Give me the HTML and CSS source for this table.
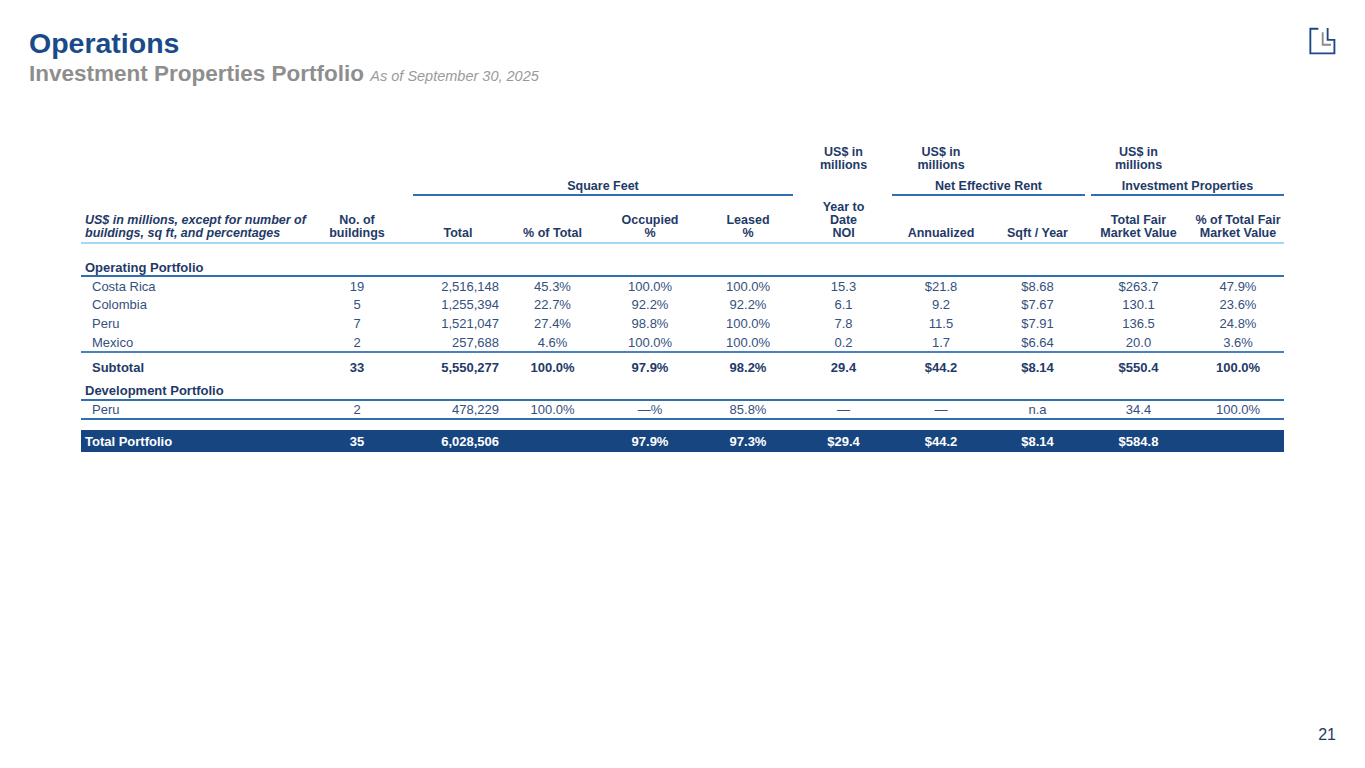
FILE: index.html
```html
<!DOCTYPE html>
<html lang="en">
<head>
<meta charset="utf-8">
<title>Operations – Investment Properties Portfolio</title>
<link rel="stylesheet" href="styles.css">
</head>
<body>
<div class="slide">
  <header class="head">
    <div class="titles">
      <h1 class="title">Operations</h1>
      <h2 class="subtitle">Investment Properties Portfolio <span class="asof">As of September 30, 2025</span></h2>
    </div>
    <svg class="logo" width="36" height="36" viewBox="15 10 35 35" aria-hidden="true">
      <path d="M28 14.6 H20.2 V38.6 H43.6 V25.4 H37 V13.8" fill="none" stroke="#1d4787" stroke-width="1.8"/>
      <path d="M32.2 18 V30.2 H40.3" fill="none" stroke="#8c8c8c" stroke-width="1.8"/>
    </svg>
  </header>

  <table class="grid">
    <colgroup>
      <col style="width:235px"><col style="width:82px"><col style="width:108px"><col style="width:93px">
      <col style="width:102px"><col style="width:94px"><col style="width:97px"><col style="width:98px">
      <col style="width:95px"><col style="width:107px"><col style="width:92px">
    </colgroup>
    <tr class="r-units">
      <td colspan="6"></td>
      <td class="c">US$ in<br>millions</td>
      <td class="c">US$ in<br>millions</td>
      <td></td>
      <td class="c">US$ in<br>millions</td>
      <td></td>
    </tr>
    <tr class="r-group">
      <td colspan="2"></td>
      <td colspan="4"><div class="grp grp-sf">Square Feet</div></td>
      <td></td>
      <td colspan="2"><div class="grp">Net Effective Rent</div></td>
      <td colspan="2"><div class="grp grp-ip">Investment Properties</div></td>
    </tr>
    <tr class="r-head">
      <td class="lbl-head">US$ in millions, except for number of<br>buildings, sq ft, and percentages</td>
      <td class="c">No. of<br>buildings</td>
      <td class="c total-h">Total</td>
      <td class="c">% of Total</td>
      <td class="c">Occupied<br>%</td>
      <td class="c">Leased<br>%</td>
      <td class="c">Year to<br>Date<br>NOI</td>
      <td class="c">Annualized</td>
      <td class="c">Sqft / Year</td>
      <td class="c">Total Fair<br>Market Value</td>
      <td class="c">% of Total Fair<br>Market Value</td>
    </tr>
    <tr class="r-section r-sec-op">
      <td class="sec" colspan="11">Operating Portfolio</td>
    </tr>
    <tr class="r-data r-first">
      <td class="name">Costa Rica</td><td class="c">19</td><td class="r">2,516,148</td><td class="c">45.3%</td><td class="c">100.0%</td><td class="c">100.0%</td><td class="c">15.3</td><td class="c">$21.8</td><td class="c">$8.68</td><td class="c">$263.7</td><td class="c">47.9%</td>
    </tr>
    <tr class="r-data">
      <td class="name">Colombia</td><td class="c">5</td><td class="r">1,255,394</td><td class="c">22.7%</td><td class="c">92.2%</td><td class="c">92.2%</td><td class="c">6.1</td><td class="c">9.2</td><td class="c">$7.67</td><td class="c">130.1</td><td class="c">23.6%</td>
    </tr>
    <tr class="r-data">
      <td class="name">Peru</td><td class="c">7</td><td class="r">1,521,047</td><td class="c">27.4%</td><td class="c">98.8%</td><td class="c">100.0%</td><td class="c">7.8</td><td class="c">11.5</td><td class="c">$7.91</td><td class="c">136.5</td><td class="c">24.8%</td>
    </tr>
    <tr class="r-data r-last">
      <td class="name">Mexico</td><td class="c">2</td><td class="r">257,688</td><td class="c">4.6%</td><td class="c">100.0%</td><td class="c">100.0%</td><td class="c">0.2</td><td class="c">1.7</td><td class="c">$6.64</td><td class="c">20.0</td><td class="c">3.6%</td>
    </tr>
    <tr class="r-sub">
      <td class="name">Subtotal</td><td class="c">33</td><td class="r">5,550,277</td><td class="c">100.0%</td><td class="c">97.9%</td><td class="c">98.2%</td><td class="c">29.4</td><td class="c">$44.2</td><td class="c">$8.14</td><td class="c">$550.4</td><td class="c">100.0%</td>
    </tr>
    <tr class="r-section r-sec-dev">
      <td class="sec" colspan="11">Development Portfolio</td>
    </tr>
    <tr class="r-data r-dev">
      <td class="name">Peru</td><td class="c">2</td><td class="r">478,229</td><td class="c">100.0%</td><td class="c">—%</td><td class="c">85.8%</td><td class="c">—</td><td class="c">—</td><td class="c">n.a</td><td class="c">34.4</td><td class="c">100.0%</td>
    </tr>
    <tr class="r-gap"><td colspan="11"></td></tr>
    <tr class="r-total">
      <td class="tot-name">Total Portfolio</td><td class="c">35</td><td class="r">6,028,506</td><td class="c"></td><td class="c">97.9%</td><td class="c">97.3%</td><td class="c">$29.4</td><td class="c">$44.2</td><td class="c">$8.14</td><td class="c">$584.8</td><td class="c"></td>
    </tr>
  </table>

  <footer class="foot">21</footer>
</div>
</body>
</html>
```

FILE: styles.css
```css
* { box-sizing: border-box; }
html, body { margin: 0; padding: 0; background: #ffffff; }
body { font-family: "Liberation Sans", Arial, sans-serif; }

.slide {
  width: 1365px;
  height: 768px;
  display: flex;
  flex-direction: column;
  overflow: hidden;
}

.head {
  display: flex;
  justify-content: space-between;
  align-items: flex-start;
  padding: 28px 24px 0 29px;
}
.title {
  margin: 0;
  font-size: 28.5px;
  line-height: 30px;
  font-weight: bold;
  color: #1a4a89;
}
.subtitle {
  margin: 4px 0 0;
  font-size: 22.5px;
  line-height: 24px;
  font-weight: bold;
  color: #8e8e8e;
}
.asof {
  font-size: 14.5px;
  font-weight: normal;
  font-style: italic;
  color: #9a9a9a;
}
.logo { margin-top: -4px; display: block; }

.grid {
  margin: 57px 0 0 81px;
  width: 1203px;
  table-layout: fixed;
  border-collapse: separate;
  border-spacing: 0;
  font-size: 13px;
  color: #34507e;
}
.grid td { padding: 0; white-space: nowrap; }
.c { text-align: center; }
.r { text-align: right; padding-right: 7px !important; }

.r-units td {
  font-size: 12.5px;
  font-weight: bold;
  line-height: 13px;
  color: #1f3a68;
  vertical-align: top;
  height: 27px;
  padding-top: 1px;
}
.r-group td { vertical-align: bottom; }
.grp {
  padding-top: 7px;
  line-height: 15px;
  font-size: 12.5px;
  font-weight: bold;
  color: #1f3a68;
  text-align: center;
  border-bottom: 2px solid #2f70b3;
}
.grp-sf { margin-left: 15px; margin-right: 2px; }
.grp-ip { margin-left: 6px; }

.r-head td {
  font-size: 12.5px;
  font-weight: bold;
  line-height: 13px;
  color: #1f3a68;
  vertical-align: bottom;
  height: 48px;
  padding-bottom: 2px;
  border-bottom: 2px solid #a6d8f3;
}
.r-head .lbl-head { font-style: italic; padding-left: 4px; }
.r-head .total-h { padding-left: 12px; }

.sec {
  font-weight: bold;
  color: #1f3a68;
  padding-left: 4px !important;
  line-height: 15px;
}
.r-sec-op .sec { padding-top: 16px !important; border-bottom: 2px solid #2f70b3; }
.r-sec-dev .sec { padding-top: 3px !important; padding-bottom: 1px !important; border-bottom: 2px solid #2f70b3; }

.r-data td { height: 19px; line-height: 17px; vertical-align: top; }
.r-first td { line-height: 19px; }
.name { padding-left: 11px !important; }
.r-last td { border-bottom: 2px solid #4a7fc0; }
.r-dev td { border-bottom: 2px solid #2f70b3; }

.r-sub td {
  font-weight: bold;
  color: #1f3a68;
  height: 27px;
  line-height: 15px;
  padding-top: 7px;
  vertical-align: top;
}
.r-sub .name { padding-left: 11px !important; }

.r-gap td { height: 10px; }

.r-total td {
  background: #17457f;
  color: #ffffff;
  font-weight: bold;
  height: 22px;
  line-height: 21px;
  padding-top: 1px;
  vertical-align: top;
}
.r-total .tot-name { padding-left: 4px; }

.foot {
  margin-top: auto;
  padding: 0 29px 24px 0;
  text-align: right;
  font-size: 16px;
  line-height: 18px;
  color: #1f3a68;
}
```
